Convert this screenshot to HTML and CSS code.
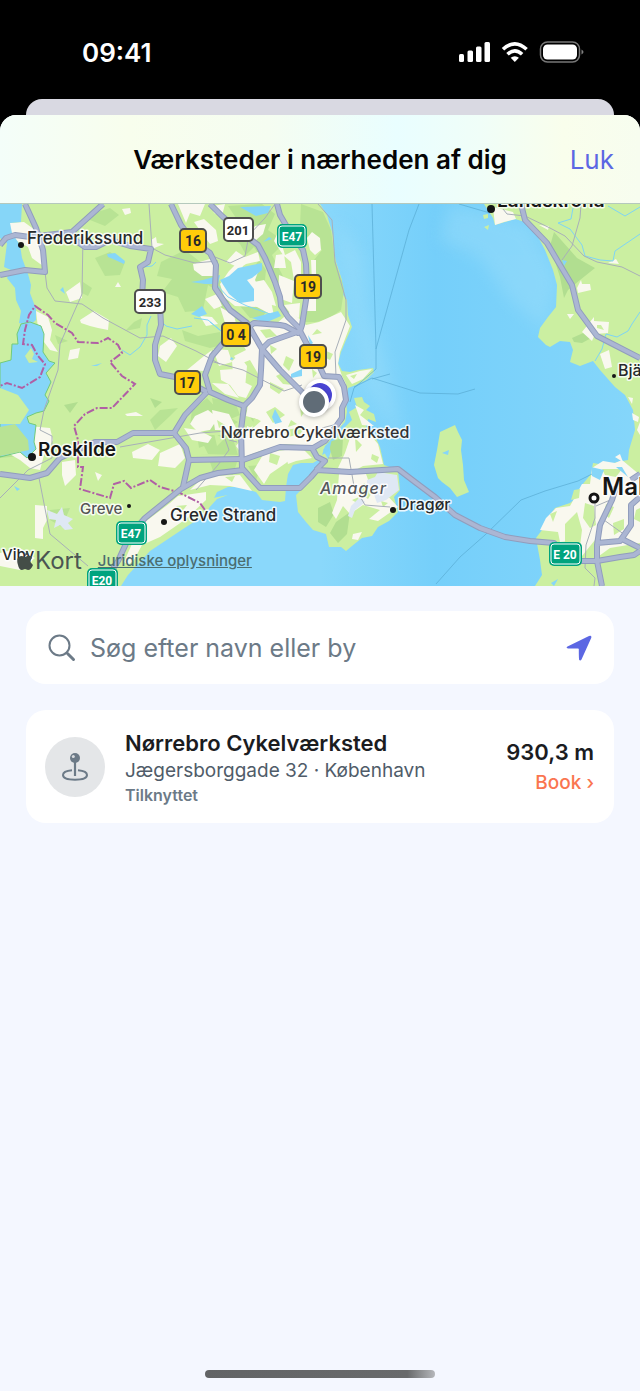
FILE: index.html
```html
<!DOCTYPE html>
<html lang="da">
<head>
  <meta charset="UTF-8">
  <meta name="viewport" content="width=device-width, initial-scale=1.0">
  <title>Værksteder i nærheden af dig</title>
  <link rel="stylesheet" href="styles.css">
</head>
<body>
  <div class="status-bar">
    <span class="time">09:41</span>
    <svg class="status-icons" width="126" height="24" viewBox="0 0 126 24" aria-hidden="true">
      <g fill="#fff">
        <rect x="1" y="14" width="5" height="8" rx="1.5"/>
        <rect x="9.500" y="10.500" width="5.500" height="11.500" rx="1.500"/>
        <rect x="18" y="6.500" width="5.500" height="15.500" rx="1.500"/>
        <rect x="26.500" y="2" width="5.500" height="20" rx="1.500"/>
        <path d="M56.800 22l4.100-4.200a6 6 0 0 0-8.200 0z"/>
        <rect x="85" y="4.500" width="34" height="15" rx="4.500"/>
        <path d="M123.500 9.500q4 2.500 0 5z" opacity=".5"/>
      </g>
      <g fill="none" stroke="#fff" stroke-width="3.600">
        <path d="M45 9.300q11.800-11 23.600 0"/>
        <path d="M49.500 14.300q7.300-6.800 14.600 0"/>
      </g>
      <rect x="82.500" y="2" width="39" height="20" rx="7" fill="none" stroke="#777" stroke-width="1.500"/>
    </svg>
  </div>

  <div class="sheet-behind"></div>

  <main class="sheet">
    <header class="nav-bar">
      <h1>Værksteder i nærheden af dig</h1>
      <button class="close" type="button">Luk</button>
    </header>

    <section class="map" aria-label="Kort">
      <svg class="map-canvas" viewBox="0 204 640 382" preserveAspectRatio="xMidYMid slice">
        <defs>
          <linearGradient id="sea" x1="0" y1="0" x2="1" y2="0">
            <stop offset=".5" stop-color="#8ad8fb"/>
            <stop offset=".68" stop-color="#75cffa"/>
            <stop offset="1" stop-color="#85d6fa"/>
          </linearGradient>
          <g id="roads">
            <path d="M25 204L36 228L43 250L45 272L25 270L0 275"/>
            <path d="M0 245L6 238L15 235L30 237L72 232L103 204"/>
            <path d="M72 238L85 247L96 247L110 240L130 246L151 249L148 262L140 267L143 280L142 296"/>
            <path d="M160 306L161 325L155 345L155 360L160 374L175 377L188 382L207 392"/>
            <path d="M171 204L181 225L193 241L210 253L216 265L215 288L230 310L247 323L262 349L280 370L308 398"/>
            <path d="M210 204L222 216L238 230L258 245L265 258L275 282L280 297L281 306L288 317L300 329"/>
            <path d="M277 204L280 215L290 232L303 250L306 264L307 286L306 300L302 325L300 331L310 350L318 363L324 376L339 377L344 387L346 400L342 408L342 418L337 425L325 441L313 448L280 447L243 460"/>
            <path d="M247 328L254 323L280 325L285 326L298 333L300 331L280 338L269 342L262 349L261 370L260 385L252 398L244 406L241 430L242 468L260 488L300 488L311 477L317 470L350 472L398 469L415 482L435 497L455 515L480 528L505 537L530 541L554 543L568 555L581 561L597 561L620 557L634 555L640 551"/>
            <path d="M244 406L228 400L210 392L205 375L212 356L224 342L236 334"/>
            <path d="M207 392L185 415L174 433L133 433L117 442L95 442L60 458L47 473L30 478L0 474"/>
            <path d="M174 433L186 448L189 460L241 459M189 460L183 487"/>
            <path d="M243 470L218 473L200 478L181 489L145 518L130 535L118 561L102 586"/>
            <path d="M312 448L317 457L325 461L316 470"/>
            <path d="M521 204L525 220L547 243L560 265L572 285L578 310L597 336L640 358"/>
            <path d="M616 487L612 500L600 525L597 545L597 561L602 586M597 543L620 541L631 525L631 505L640 497M620 538L640 548M631 480L640 474"/>
          </g>
        </defs>

        <rect y="204" width="640" height="382" fill="url(#sea)"/>
        <path class="shallow" d="M450 204L530 225L558 280L545 330L510 300L480 258L440 240ZM335 220L360 250L366 310L385 360L400 430L400 440L365 385Z"/>

        <!-- land -->
        <path class="land" d="M0 204H320L327 215L333 235L334 250L336 262L342 280L341 292L347 300L348 315L352 327L346 340L341 352L338 363L342 371L350 372L358 370L373 368L374 372L366 380L356 385L348 388L346 398L347 412L345 422L338 430L330 441L323 450L329 461L318 460L313 463L301 463L293 465L288 474L286 487L285 501L280 502L262 500L256 492L240 487L228 487L217 492L208 510L200 518L180 531L165 541L150 551L140 562L128 575L121 586H0Z"/>
        <path class="land" d="M335 440L345 427L352 420L349 412L357 407L354 398L362 397L364 402L370 406L366 410L374 414L376 422L368 419L366 427L373 432L380 447L384 465L398 470L400 490L394 497L398 512L389 521L378 527L372 536L362 538L352 546L346 551L341 547L329 547L326 534L313 530L306 522L298 512L296 495L308 483L318 470L328 460Z"/>
        <path class="land" d="M484 204L493 218L495 225L505 222L515 219L525 222L537 235L545 250L553 270L557 285L556 307L548 317L540 328L538 337L546 345L550 347L560 341L570 342L573 350L570 362L580 366L593 361L600 370L615 387L625 395L633 410L635 430L629 450L628 460L618 462L605 465L593 463L591 474L582 485L580 495L570 503L555 508L548 518L542 530L536 538L540 560L542 575L535 586H640V204Z"/>
        <path class="land" d="M455 425L458 432L462 440L461 450L463 465L464 480L469 492L457 497L450 488L442 482L438 478L434 465L437 450L440 432Z"/>
        <path class="land" d="M483 215L488 214L488 218L484 219ZM484 227L489 225L488 230Z"/>
        <path class="land" d="M208 499L228 495L217 499L207 510L201 514Z"/>

        <!-- woods -->
        <path class="wood" d="M88 215L110 208L119 215L105 226L90 220ZM95 258L110 252L125 262L120 275L105 276ZM83 282L92 288L88 296L82 293ZM161 262L185 250L208 268L216 262L216 290L208 285L203 310L185 312L178 297L162 292L172 279L157 276ZM134 322L142 318L140 328L125 331ZM182 330L198 336L220 332L222 345L210 348L185 341ZM55 335L68 341L58 344ZM0 424L20 424L30 445L30 455L0 458ZM50 510L70 508L62 527L50 520ZM160 410L178 408L170 416L155 430L150 420Z"/>
        <path class="wood" d="M228 206L262 204L275 214L268 230L285 242L272 255L285 280L296 282L292 300L280 290L264 263L254 247L246 255L240 244L224 232L238 221ZM301 204L323 212L331 230L335 260L342 281L344 290L341 310L328 319L316 322L300 322L308 308L318 288L314 260L322 250L310 240L300 226ZM259 260L266 270L264 290L270 305L262 318L250 318L240 306L250 292L245 280ZM218 278L230 300L225 318L216 300ZM212 398L235 402L240 415L228 420L215 415ZM192 410L207 398L220 412L238 422L225 430L205 432L190 425ZM210 462L237 462L233 475L213 471ZM248 466L262 465L256 480ZM197 435L232 435L238 455L200 454ZM245 410L258 408L268 418L256 426ZM298 350L308 346L304 366L296 360Z"/>
        <path class="wood-dark" d="M318 508L330 502L334 514L326 527L318 522ZM336 522L350 512L347 534L338 543L330 533ZM328 442L343 438L342 456L333 460ZM554 232L570 250L577 258L595 268L580 280L568 290L564 298L560 277L550 246ZM572 338L590 330L595 336L582 343L574 342ZM150 398L162 402L155 408ZM64 405L78 402L70 413Z"/>

        <!-- built-up areas -->
        <path class="town" d="M252 324L262 318L276 324L291 311L306 325L319 322L341 312L350 326L340 352L338 364L342 376L346 384L346 402L342 424L328 440L316 446L285 444L263 450L244 457L236 446L250 428L259 420L246 416L249 400L258 391L262 382L257 372L250 360L240 364L234 356L246 350L240 340Z"/>
        <path class="town" d="M9 223L24 222L35 230L42 250L43 266L32 258L28 247L17 241L10 233ZM36 311L48 317L52 330L50 340L58 352L50 350L44 342L38 328ZM28 426L50 428L53 440L44 455L40 470L30 468L20 460L8 453L30 450ZM35 505L47 506L47 520L43 528L43 539L35 538ZM0 553L20 548L35 558L20 570L0 566Z"/>
        <path class="town" d="M66 292L80 282L82 298L70 302ZM80 320L94 311L109 320L108 330L98 328L90 326L81 323ZM70 350L80 348L78 358L68 360ZM118 282L121 287L115 287ZM122 209L130 208L131 213L125 215ZM151 240L156 237L157 243L164 244L152 249ZM160 346L171 338L177 346L166 362L158 356ZM178 204L205 204L200 216L190 213L186 223ZM193 264L213 258L213 276L202 276L194 270ZM205 299L217 294L222 306L214 309ZM187 370L204 356L212 350L205 371ZM200 316L212 317L218 324L206 326ZM125 414L136 412L143 416L127 416ZM132 452L148 444L160 450L152 460L133 458ZM160 453L180 444L185 458L175 468L158 466ZM195 416L208 410L218 418L210 430L198 432L190 424ZM62 462L75 460L76 475L65 486L62 475ZM95 472L102 475L98 481Z"/>
        <path class="town" d="M212 206L225 204L222 216L214 213ZM194 222L204 219L216 230L218 241L210 244L204 236ZM226 262L236 251L245 257L258 252L260 261L246 264L240 268ZM255 226L266 224L263 234L256 240L248 236ZM278 232L285 255L295 250L301 262L301 285L294 280L291 262L283 255L274 241ZM312 232L320 238L321 250L315 255L310 250L307 238ZM311 260L316 260L316 311L306 311L308 292L312 282ZM276 255L284 254L286 268L274 268ZM279 275L294 281L292 303L278 298ZM284 305L300 303L299 318L291 314ZM229 271L238 262L246 270L260 267L255 280L260 290L271 301L274 316L257 307L235 306L224 297L220 284ZM249 283L264 280L272 292L276 306L264 303L258 294ZM220 307L234 315L238 332L226 326ZM213 349L228 350L232 362L219 366ZM239 355L247 366L245 388L233 374L232 361ZM220 370L234 369L244 382L252 386L246 398L238 396L230 385L221 380ZM212 383L228 384L239 398L225 394ZM212 410L229 414L237 430L215 430ZM184 428L198 430L212 437L208 443L192 440ZM247 426L259 431L258 442L246 455ZM264 453L285 450L297 452L286 463L270 474L264 484L254 470ZM284 449L304 450L312 458L296 461L288 464ZM212 476L240 475L252 491L230 486L210 485L190 490L198 482ZM145 522L170 503L178 496L206 492L206 500L186 519L160 537L142 545L134 560L128 565L124 562L135 537Z"/>
        <path class="town" d="M350 438L366 430L378 444L383 464L363 466L352 472L338 468L345 453ZM339 474L366 474L370 485L384 492L398 507L378 521L369 519L380 510L363 505L350 514L343 506L336 519L332 513L337 500ZM355 405L364 410L360 415L374 426L362 425ZM346 375L360 371L372 369L363 379L352 384ZM353 534L362 532L358 540L352 539Z"/>
        <path class="town" d="M493 207L513 212L516 219L504 222L495 225ZM539 225L549 226L548 230ZM577 288L581 280L582 284L590 284L591 290L578 293ZM582 332L594 317L594 321L609 322L608 333L595 334L592 341ZM567 314L574 314L570 319ZM608 263L616 259L619 264ZM600 354L609 350L612 367L605 369ZM592 468L603 461L615 463L622 460L640 475V543L610 548L599 556L595 540L582 556L570 541L560 542L558 532L540 530L546 518L556 508L570 506L582 484L590 484ZM615 457L620 454L623 462ZM628 397L633 398L632 404ZM632 413L639 417L638 422L633 420ZM640 422L637 430L640 435Z"/>
        <path class="land" d="M585 503L594 506L596 525L590 528L583 518ZM565 524L577 512L582 530L580 546L565 544ZM602 469L622 469L616 477L605 475ZM284 430L306 427L300 434L288 437ZM324 350L333 354L330 360L322 356ZM303 340L313 347L308 350ZM270 382L284 389L279 394L270 388ZM266 412L275 407L285 415L273 423ZM276 376L282 373L293 385L283 384ZM234 284L247 287L249 299L238 295ZM214 433L224 439L217 446ZM270 453L280 456L277 465L269 462ZM372 454L379 457L377 463L371 459ZM355 438L362 445L356 452ZM364 483L373 491L368 499L358 492ZM317 329L322 333L312 335ZM597 325L601 325L604 330L597 328ZM286 356L294 360L289 371L283 365ZM260 330L270 329L277 336L266 338Z"/>
        <path class="land" d="M300 405L306 410L301 417ZM270 345L277 349L271 354ZM312 369L317 373L313 378ZM254 418L261 421L252 429ZM291 420L297 424L288 427ZM196 449L204 446L208 454L197 454ZM217 420L225 425L219 428ZM176 506L187 505L181 513ZM225 477L235 476L232 482ZM350 376L357 374L354 379ZM352 500L359 497L357 503ZM381 501L388 503L383 507ZM606 504L614 507L609 518L604 514ZM613 523L624 519L624 529L614 535ZM636 510L640 508V522L634 519ZM550 514L557 511L553 522ZM574 490L580 489L579 498L571 500Z"/>
        <path class="airport" d="M367 480L375 477L378 472L397 475L399 490L386 500L377 503L372 489L367 491ZM360 497L365 502L355 510L352 518L348 516L351 506Z"/>
        <path class="airport" d="M47 510L57 514L62 507L64 515L73 519L68 523L73 529L65 530L60 525L54 528L56 520L49 519Z"/>

        <!-- lakes, inlets and streams -->
        <path class="water" d="M0 204H22L21 222L10 223L12 233L20 245L22 258L28 274L31 285L30 293L36 309L36 320L29 326L19 323L21 311L16 300L15 288L7 278L11 270L4 267L7 243L0 238Z"/>
        <path class="water protected" d="M21 324L30 322L41 326L44 334L43 352L49 361L55 363L46 373L51 382L45 395L49 401L44 411L36 413L27 417L29 423L36 425L34 442L36 449L27 458L20 452L0 457V363L11 360L12 344L18 344L17 334Z"/>
        <path class="land" d="M0 388L18 395L29 410L20 424L0 424ZM25 356L31 348L34 354L32 359L38 362L29 363Z"/>
        <path class="wood" d="M0 427L15 424L28 440L29 450L0 456Z"/>
        <path class="water" d="M107 254L115 253L125 261L124 264L113 259L108 257ZM60 290L63 287L65 294ZM191 282L203 280L220 275L218 284L205 284ZM191 314L202 306L207 314L199 317ZM91 366L102 363L97 366ZM240 207L271 206L268 213L256 216ZM220 280L229 276L238 268L262 263L262 270L252 278L247 280L254 289L254 301L240 303L229 294ZM252 318L278 311L281 316L265 323ZM269 237L272 239L263 242ZM14 486L20 489L17 491ZM272 417L275 409L282 422L275 424ZM291 374L302 369L302 376L291 378ZM325 446L332 439L329 451L322 455ZM562 260L567 261L564 266ZM231 357L234 359L230 360ZM308 335L313 343L310 345ZM442 453L449 450L448 455ZM551 583L558 579L554 586ZM591 467L604 470L600 480L592 476ZM616 467L622 467L628 477Z"/>
        <path class="stream" d="M151 316L147 325L147 335L140 347L130 355L122 350M160 320L166 326L177 329L192 326M194 318L208 320L220 330M142 267L152 266L156 262M215 283L228 297L247 306L270 314M210 322L221 331M573 208L571 219L558 223L570 229L582 245L585 256L600 260L613 261L615 251L640 234M608 206L625 216L640 207M640 312L632 324L628 331L617 337L606 334L602 349L595 361"/>

        <!-- minor roads and ferry lines -->
        <path class="minor" d="M149 204L152 248L165 255L195 263L218 261M83 236L82 294L60 344L58 370L44 410L40 430L52 436L52 458L28 470L0 498M45 272L47 288L55 301L82 304L103 318L140 338L163 336L196 351L220 364M39 478L50 534L88 566M120 447L200 433L240 430M318 204L332 220L335 262L346 300L346 320L335 352L336 376M275 204L265 218L249 235L245 256L230 263L215 257M210 361L243 370L284 391L302 385M503 209L507 214L525 216L550 228L565 236L584 256L597 262L622 267L640 276M581 204L580 218L572 246L562 260M595 500L595 518L586 545L585 568L595 578L594 586M596 506L615 498M604 520L625 535M328 458L349 458L354 486L365 505L390 507M196 490L218 465L229 450L222 430M322 428L341 423M229 440L237 442"/>
        <path class="ferry" d="M372 204L376 349L376 369L354 388L350 402M419 204L409 230L376 349M354 387L372 378L420 393L458 394L475 389M372 379L390 374M436 584L460 557L485 535L521 500L545 491L578 481L592 474M459 204L490 213"/>

        <path class="border" d="M205 510L200 503L178 492L160 487L150 480L131 488L124 481L114 484L110 498L80 489L83 467L78 467L78 440L74 426L85 414L97 408L112 408L135 384L122 376L110 362L122 353L118 345L108 338L98 343L78 342L72 333L55 323L48 315L35 306L29 315L25 330L23 344L32 345L38 356L45 364L40 377L22 388L7 383L0 386"/>

        <use href="#roads" class="road-case"/>
        <use href="#roads" class="road-fill"/>

        <!-- road shields -->
        <g class="shield shield-yellow">
          <rect x="180" y="229" width="26" height="23" rx="4"/><text x="193" y="246">16</text>
          <rect x="295" y="275" width="26" height="23" rx="4"/><text x="308" y="292">19</text>
          <rect x="222" y="323" width="28" height="23" rx="4"/><text x="236" y="340">0 4</text>
          <rect x="300" y="345" width="26" height="23" rx="4"/><text x="313" y="362">19</text>
          <rect x="175" y="371" width="25" height="23" rx="4"/><text x="187" y="388">17</text>
        </g>
        <g class="shield shield-white">
          <rect x="224" y="218" width="29" height="23" rx="4"/><text x="238" y="235">201</text>
          <rect x="135" y="290" width="30" height="23" rx="4"/><text x="150" y="307">233</text>
        </g>
        <g class="shield shield-green">
          <rect class="rim" x="277" y="224" width="30" height="24" rx="5"/><rect x="279" y="226" width="26" height="20" rx="3"/><text x="292" y="241">E47</text>
          <rect class="rim" x="116" y="521" width="31" height="24" rx="5"/><rect x="118" y="523" width="27" height="20" rx="3"/><text x="131" y="538">E47</text>
          <rect class="rim" x="87" y="568" width="31" height="24" rx="5"/><rect x="89" y="570" width="27" height="20" rx="3"/><text x="102" y="585">E20</text>
          <rect class="rim" x="549" y="542" width="33" height="24" rx="5"/><rect x="551" y="544" width="29" height="20" rx="3"/><text x="565" y="559">E 20</text>
        </g>

        <!-- places -->
        <g class="place-dots">
          <circle cx="21" cy="245" r="3"/>
          <circle cx="32" cy="457" r="4"/>
          <circle cx="129" cy="506" r="2"/>
          <circle cx="164" cy="522" r="3"/>
          <circle cx="393" cy="510" r="3"/>
          <circle cx="614" cy="376" r="2"/>
          <circle cx="491" cy="209" r="4"/>
          <circle class="ring" cx="594" cy="498" r="4"/>
        </g>
        <g class="place">
          <text x="27" y="244" font-size="17">Frederikssund</text>
          <text class="city" x="38" y="456" font-size="19">Roskilde</text>
          <text class="small" x="80" y="514" font-size="15">Greve</text>
          <text x="170" y="521" font-size="17">Greve Strand</text>
          <text x="398" y="510" font-size="16">Dragør</text>
          <text class="district" x="320" y="494" font-size="16">Amager</text>
          <text x="2" y="560" font-size="15">Viby</text>
          <text x="618" y="376" font-size="16">Bjärred</text>
          <text class="city" x="497" y="207" font-size="19">Landskrona</text>
          <text class="city" x="602" y="495" font-size="24">Malmö</text>
          <text class="workshop" x="315" y="438" font-size="16">Nørrebro Cykelværksted</text>
        </g>

        <!-- user position and workshop pin -->
        <g class="pins">
          <circle class="me" cx="320" cy="395" r="14"/>
          <circle class="pin" cx="314" cy="402" r="13"/>
        </g>
      </svg>

      <div class="map-credit">
        <span class="map-brand">
          <svg width="16" height="20" viewBox="0 0 16 20" aria-hidden="true"><path d="M11 0q0 4-3 5Q8 1 11 0ZM8 6Q14 3 15 7Q11 10 16 14Q14 19 11 19L8 18L5 19Q2 19 1 14Q-1 8 2 6Q4 4 8 6Z"/></svg>Kort
        </span>
        <a class="legal" href="#">Juridiske oplysninger</a>
      </div>
    </section>

    <div class="content">
      <form class="search" role="search">
        <label class="search-label" for="search" aria-label="Søg">
          <svg width="28" height="28" viewBox="0 0 28 28" fill="none" stroke="#6c7a87" stroke-linecap="round"><circle cx="11.500" cy="11.500" r="10" stroke-width="2"/><path d="M19.500 19.500L25.500 25.500" stroke-width="3"/></svg>
        </label>
        <input id="search" type="text" placeholder="Søg efter navn eller by">
        <button class="locate" type="button" aria-label="Brug min placering">
          <svg width="26" height="26" viewBox="0 0 26 26"><path d="M1.500 11.500L23 1Q26 0 25.200 3L15.500 24.500Q14.500 26 13.200 25Q12.800 24.500 12.800 14.200Q12.800 13.500 12 13.500L2 13.400Q-.5 12.800 1.500 11.500Z" fill="#5c67e3"/></svg>
        </button>
      </form>

      <ul class="results">
        <li class="result">
          <span class="result-icon">
            <svg width="28" height="32" viewBox="0 0 28 32" fill="none" stroke="#6c7a87"><path d="M11 19.200C5 19.700 2 21.500 2 24C2 27 7 28.700 14 28.700S26 27 26 24C26 21.500 23 19.700 17 19.200" stroke-width="2"/><path d="M14 9V25" stroke-width="2.200"/><circle cx="14" cy="7" r="5" fill="#6c7a87" stroke="none"/><circle cx="12.300" cy="5.500" r="1.500" fill="#d9dcdf" stroke="none"/></svg>
          </span>
          <div class="result-text">
            <h2>Nørrebro Cykelværksted</h2>
            <p class="address">Jægersborggade 32 · København</p>
            <p class="state">Tilknyttet</p>
          </div>
          <div class="result-side">
            <span class="distance">930,3 m</span>
            <a class="book" href="#">Book ›</a>
          </div>
        </li>
      </ul>
    </div>

    <div class="home-indicator"></div>
  </main>
</body>
</html>
```

FILE: styles.css
```css
* {
  box-sizing: border-box;
}
body {
  margin: 0;
  min-height: 100vh;
  display: flex;
  flex-direction: column;
  background-color: #000;
  color: #1b1c1f;
  font-family: Inter, "Liberation Sans", sans-serif;
}
button {
  padding: 0;
  border: 0;
  background: none;
  font: inherit;
}
h1, h2, p, ul {
  margin: 0;
  padding: 0;
}

/* Status bar */
.status-bar {
  height: 99px;
  padding: 0 56px 0 82px;
  display: flex;
  align-items: center;
  justify-content: space-between;
  color: #fff;
}
.time {
  font-size: 26px;
  font-weight: 600;
  padding-top: 6px;
}
.status-icons {
  margin-top: 4px;
}

/* Sheet */
.sheet-behind {
  height: 30px;
  margin: 0 26px -14px;
  border-radius: 16px 16px 0 0;
  background-color: #d9d9e2;
}
.sheet {
  position: relative;
  flex: 1;
  display: flex;
  flex-direction: column;
  border-radius: 16px 16px 0 0;
  overflow: hidden;
  background-color: #f4f7ff;
}
.nav-bar {
  height: 89px;
  padding: 0 26px;
  display: grid;
  grid-template-columns: 1fr auto 1fr;
  align-items: center;
  background: linear-gradient(90deg, #f4fef9 0%, #f8feed 20%, #f5fdf1 42%, #e9feff 62%, #f0fef8 75%, #f9feec 88%, #f7fdef 100%);
}
.nav-bar h1 {
  grid-column: 2;
  font-size: 26px;
  font-weight: 600;
  color: #050505;
}
.close {
  justify-self: end;
  font-size: 26px;
  color: #5c67e3;
}

/* Map */
.map {
  position: relative;
  height: 382px;
  box-shadow: 0 -1px 0 #b5c9bd;
}
.map-canvas {
  display: block;
  width: 100%;
  height: 100%;
}
.shallow { fill: #9fdffa; opacity: .4; filter: blur(8px); }
.land { fill: #cbefa1; }
.wood { fill: #b8e394; }
.wood-dark { fill: #b1de90; }
.town { fill: #f9f8ef; }
.airport { fill: #dfe8f4; }
.water { fill: #86d6f8; }
.protected { stroke: #72cb79; stroke-width: 1; }
.stream { fill: none; stroke: #7ed4f5; stroke-width: 1; }
.minor { fill: none; stroke: #a8afb8; stroke-width: 1; }
.ferry { fill: none; stroke: #58abd3; stroke-width: 1; opacity: .7; }
.border { fill: none; stroke: #b05fa5; stroke-width: 2; stroke-dasharray: 8 2 2 2; }
.road-case, .road-fill {
  fill: none;
  stroke-linejoin: round;
}
.road-case { stroke: #919dbd; stroke-width: 6; }
.road-fill { stroke: #abb6d3; stroke-width: 4; }

.shield {
  font-family: Roboto, sans-serif;
  font-size: 14px;
  font-weight: 700;
  text-anchor: middle;
}
.shield rect {
  stroke: #4e4e4e;
  stroke-width: 2;
}
.shield text { fill: #292929; }
.shield-yellow rect { fill: #ffcc0a; }
.shield-white rect { fill: #fff; }
.shield-white text { font-size: 13px; }
.shield-green rect { fill: #00a37e; stroke: #fff; stroke-width: 1; }
.shield-green .rim { fill: #00a37e; stroke: none; }
.shield-green text { fill: #fff; font-size: 12px; }

.place-dots circle { fill: #161616; }
.place-dots .ring { fill: #fff; stroke: #161616; stroke-width: 3; }
.place text {
  fill: #26292b;
  font-weight: 500;
  paint-order: stroke;
  stroke: rgba(255, 255, 255, .85);
  stroke-width: 3px;
  stroke-linejoin: round;
}
.place .city { fill: #161616; font-weight: 600; }
.place .small { fill: #555; }
.place .district { fill: #55585c; font-style: italic; letter-spacing: 1px; }
.place .workshop { fill: #333; text-anchor: middle; }
.pins circle {
  stroke: #fff;
  stroke-width: 4;
  filter: drop-shadow(0 1px 2px rgba(0, 0, 0, .25));
}
.pins .me { fill: #4a45d4; }
.pins .pin { fill: #606c77; }

.map-credit {
  position: absolute;
  left: 17px;
  bottom: 11px;
  display: flex;
  align-items: center;
  gap: 16px;
  color: #4b5552;
}
.map-brand {
  display: flex;
  align-items: center;
  gap: 2px;
  font-size: 24px;
  line-height: 28px;
}
.map-brand svg { fill: #444d47; }
.legal {
  font-size: 15px;
  line-height: 20px;
  font-weight: 500;
  color: #4b6d70;
}

/* Search and results */
.content {
  padding: 25px 26px;
  display: flex;
  flex-direction: column;
  gap: 26px;
}
.search {
  height: 73px;
  padding: 0 22px;
  display: flex;
  align-items: center;
  gap: 14px;
  border-radius: 20px;
  background-color: #fff;
}
.search-label, .locate {
  display: flex;
}
.search input {
  flex: 1;
  min-width: 0;
  padding: 0;
  border: 0;
  outline: 0;
  background: none;
  font: inherit;
  font-size: 25px;
  color: #1b1c1f;
}
.search input::placeholder {
  color: #6c7a87;
  opacity: 1;
}
.results {
  list-style: none;
}
.result {
  min-height: 113px;
  padding: 18px 20px 18px 19px;
  display: flex;
  align-items: center;
  gap: 20px;
  border-radius: 20px;
  background-color: #fff;
}
.result-icon {
  width: 60px;
  height: 60px;
  display: flex;
  align-items: center;
  justify-content: center;
  border-radius: 50%;
  background-color: #e4e6e8;
}
.result-text {
  flex: 1;
}
.result-text h2 {
  font-size: 22px;
  line-height: 28px;
  font-weight: 600;
}
.address {
  font-size: 19px;
  line-height: 28px;
  color: #505c69;
}
.state {
  font-size: 16px;
  line-height: 20px;
  font-weight: 600;
  color: #6c7a87;
}
.result-side {
  display: flex;
  flex-direction: column;
  align-items: flex-end;
}
.distance {
  font-size: 22px;
  line-height: 32px;
  font-weight: 600;
}
.book {
  font-size: 19px;
  line-height: 30px;
  font-weight: 500;
  color: #fa7550;
  text-decoration: none;
}

.home-indicator {
  width: 36%;
  height: 8px;
  margin: auto auto 13px;
  border-radius: 4px;
  background: linear-gradient(90deg, #626466 0%, #686a6c 88%, #b5b7bb 100%);
}
```
